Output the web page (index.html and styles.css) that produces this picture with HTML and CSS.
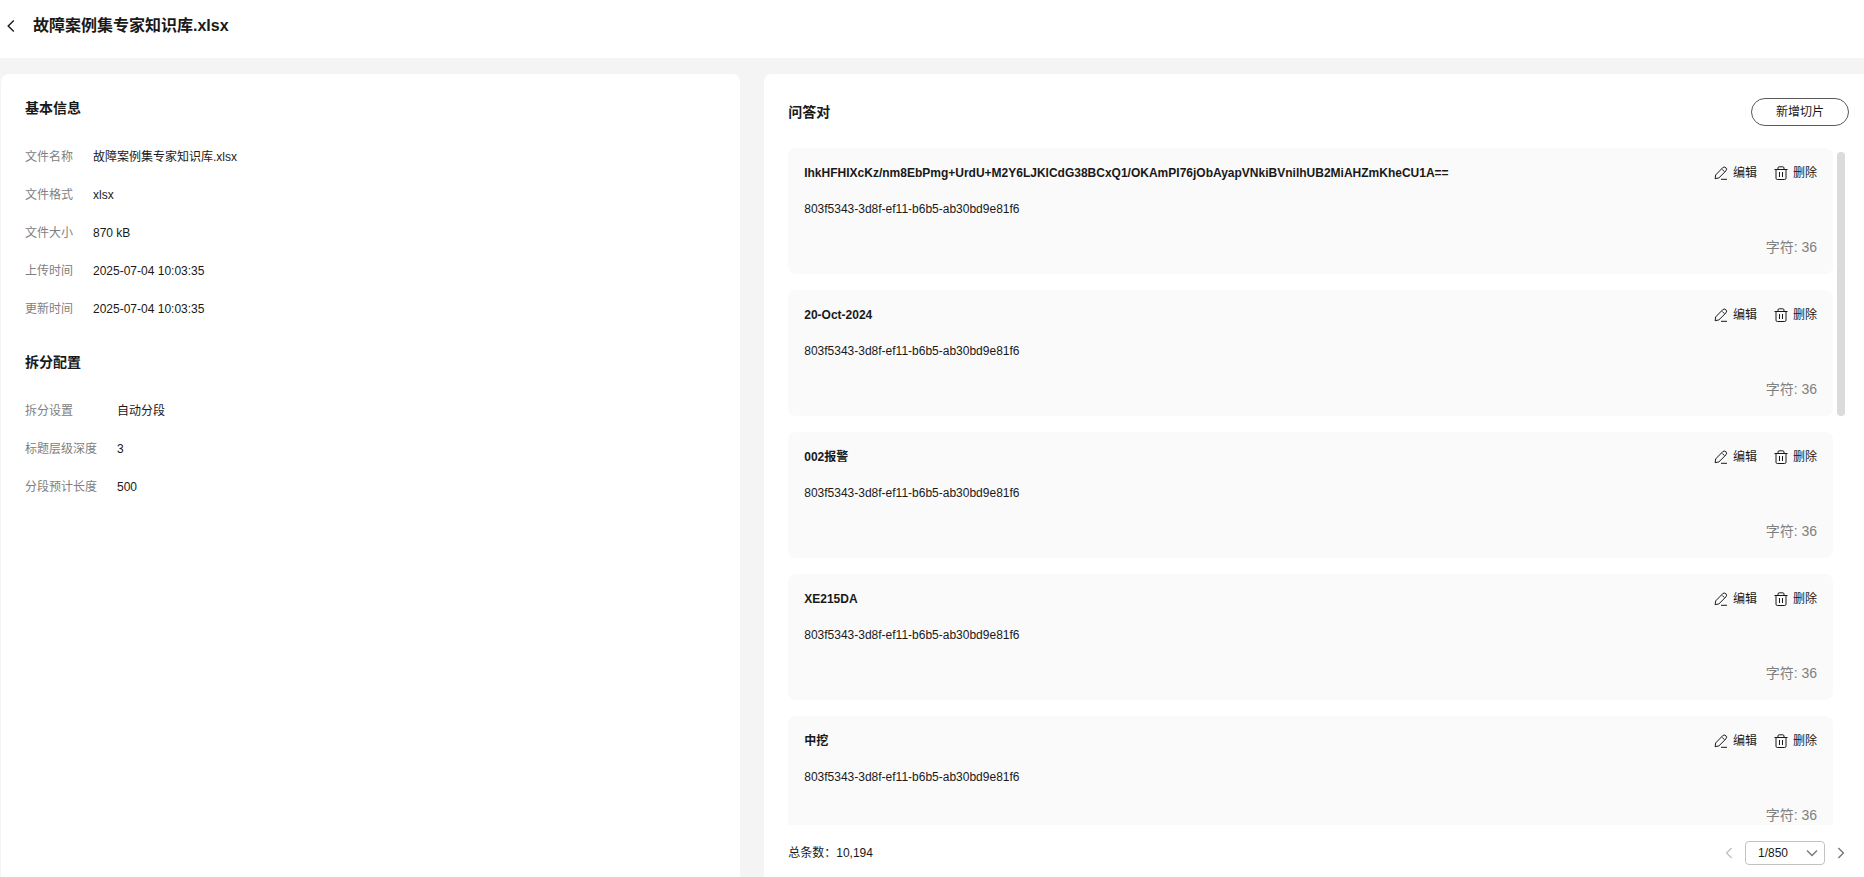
FILE: index.html
```html
<!DOCTYPE html>
<html lang="zh-CN">
<head>
    <meta charset="UTF-8">
    <meta name="viewport" content="width=device-width, initial-scale=1.0">
    <title>故障案例集专家知识库.xlsx</title>
    <link rel="stylesheet" href="styles.css">
</head>
<body>
    <svg class="sprite" aria-hidden="true">
        <symbol id="icon-edit" viewBox="0 0 14 14">
            <path d="M1.1 12.7 L1.7 8.9 L8.7 1.7 Q10.3 0.3 11.9 1.7 Q13.3 3.2 12 4.8 L4.9 11.9 Z M8.2 3.4 L10.4 5.6 M7 13.3 H13"/>
        </symbol>
        <symbol id="icon-trash" viewBox="0 0 14 14">
            <path d="M0.5 3.5 H13.5 M4 3.3 V2 Q4 0.8 5.2 0.8 H8.8 Q10 0.8 10 2 V3.3 M2 3.5 V12.2 Q2 13.5 3.3 13.5 H10.7 Q12 13.5 12 12.2 V3.5 M5.5 6 V11 M8.5 6 V11"/>
        </symbol>
    </svg>

    <header class="header">
        <button class="back" type="button" aria-label="返回">
            <svg viewBox="0 0 8 12"><path d="M6.8 0.6 L1.2 6 L6.8 11.4"/></svg>
        </button>
        <h1>故障案例集专家知识库.xlsx</h1>
    </header>

    <main class="main">
        <section class="panel info">
            <h2>基本信息</h2>
            <dl>
                <div><dt>文件名称</dt><dd>故障案例集专家知识库.xlsx</dd></div>
                <div><dt>文件格式</dt><dd>xlsx</dd></div>
                <div><dt>文件大小</dt><dd>870 kB</dd></div>
                <div><dt>上传时间</dt><dd>2025-07-04 10:03:35</dd></div>
                <div><dt>更新时间</dt><dd>2025-07-04 10:03:35</dd></div>
            </dl>
            <h2>拆分配置</h2>
            <dl class="wide">
                <div><dt>拆分设置</dt><dd>自动分段</dd></div>
                <div><dt>标题层级深度</dt><dd>3</dd></div>
                <div><dt>分段预计长度</dt><dd>500</dd></div>
            </dl>
        </section>

        <section class="panel qa">
            <div class="qa-head">
                <h2>问答对</h2>
                <button class="add" type="button">新增切片</button>
            </div>

            <div class="scroll">
                <div class="list">
                    <article class="card">
                        <div class="card-head">
                            <h3>IhkHFHIXcKz/nm8EbPmg+UrdU+M2Y6LJKlCdG38BCxQ1/OKAmPI76jObAyapVNkiBVnilhUB2MiAHZmKheCU1A==</h3>
                            <button type="button"><svg><use href="#icon-edit"/></svg>编辑</button>
                            <button type="button"><svg><use href="#icon-trash"/></svg>删除</button>
                        </div>
                        <p>803f5343-3d8f-ef11-b6b5-ab30bd9e81f6</p>
                        <div class="count">字符: 36</div>
                    </article>
                    <article class="card">
                        <div class="card-head">
                            <h3>20-Oct-2024</h3>
                            <button type="button"><svg><use href="#icon-edit"/></svg>编辑</button>
                            <button type="button"><svg><use href="#icon-trash"/></svg>删除</button>
                        </div>
                        <p>803f5343-3d8f-ef11-b6b5-ab30bd9e81f6</p>
                        <div class="count">字符: 36</div>
                    </article>
                    <article class="card">
                        <div class="card-head">
                            <h3>002报警</h3>
                            <button type="button"><svg><use href="#icon-edit"/></svg>编辑</button>
                            <button type="button"><svg><use href="#icon-trash"/></svg>删除</button>
                        </div>
                        <p>803f5343-3d8f-ef11-b6b5-ab30bd9e81f6</p>
                        <div class="count">字符: 36</div>
                    </article>
                    <article class="card">
                        <div class="card-head">
                            <h3>XE215DA</h3>
                            <button type="button"><svg><use href="#icon-edit"/></svg>编辑</button>
                            <button type="button"><svg><use href="#icon-trash"/></svg>删除</button>
                        </div>
                        <p>803f5343-3d8f-ef11-b6b5-ab30bd9e81f6</p>
                        <div class="count">字符: 36</div>
                    </article>
                    <article class="card">
                        <div class="card-head">
                            <h3>中挖</h3>
                            <button type="button"><svg><use href="#icon-edit"/></svg>编辑</button>
                            <button type="button"><svg><use href="#icon-trash"/></svg>删除</button>
                        </div>
                        <p>803f5343-3d8f-ef11-b6b5-ab30bd9e81f6</p>
                        <div class="count">字符: 36</div>
                    </article>
                </div>
                <div class="track"><div class="thumb"></div></div>
            </div>

            <footer class="footer">
                <span>总条数：10,194</span>
                <nav class="pager">
                    <button type="button" aria-label="上一页" disabled>
                        <svg viewBox="0 0 8 12"><path d="M6.6 1 L1.6 6 L6.6 11"/></svg>
                    </button>
                    <div class="page-select">
                        <select aria-label="页码">
                            <option>1/850</option>
                        </select>
                        <svg viewBox="0 0 12 8"><path d="M1 1.4 L6 6.4 L11 1.4"/></svg>
                    </div>
                    <button type="button" aria-label="下一页">
                        <svg viewBox="0 0 8 12"><path d="M1.4 1 L6.4 6 L1.4 11"/></svg>
                    </button>
                </nav>
            </footer>
        </section>
    </main>
</body>
</html>
```
FILE: styles.css
```css
* {
    box-sizing: border-box;
}
body {
    margin: 0;
    height: 100vh;
    display: flex;
    flex-direction: column;
    overflow: hidden;
    background-color: #f4f4f4;
    color: #191919;
    font-family: "Liberation Sans", "Noto Sans CJK SC", sans-serif;
    font-size: 12px;
    line-height: 18px;
}
h1, h2, h3, p, dl, dd {
    margin: 0;
}
button {
    padding: 0;
    border: 0;
    background: none;
    color: inherit;
    font: inherit;
    cursor: pointer;
}
svg {
    display: block;
    fill: none;
    stroke: currentColor;
}
.sprite {
    display: none;
}

/* header */
.header {
    display: flex;
    align-items: center;
    gap: 18px;
    height: 58px;
    padding: 0 7px 6px;
    background-color: #fff;
}
.header h1 {
    font-size: 16px;
    line-height: 24px;
}
.back svg {
    width: 8px;
    height: 12px;
    stroke-width: 1.4;
}

/* panels */
.main {
    flex: 1;
    min-height: 0;
    display: grid;
    grid-template-columns: 41fr 61fr;
    grid-template-rows: 100%;
    gap: 24px;
    padding: 16px 0 0 1px;
}
.panel {
    background-color: #fff;
    border-radius: 8px 8px 0 0;
    min-width: 0;
}
h2 {
    font-size: 14px;
    line-height: 20px;
}
.info {
    padding: 24px;
}
.info dl {
    display: flex;
    flex-direction: column;
    gap: 20px;
    margin: 30px 0 34px;
}
.info dl div {
    display: flex;
    gap: 20px;
}
.info dt {
    width: 48px;
    color: #808080;
}
.info .wide dt {
    width: 72px;
}

/* question and answer list */
.qa {
    display: flex;
    flex-direction: column;
    padding: 24px 15px 0 24px;
    border-top-right-radius: 0;
}
.qa-head {
    display: flex;
    align-items: center;
    justify-content: space-between;
    margin-bottom: 22px;
}
.add {
    width: 98px;
    height: 28px;
    border: 1px solid #595959;
    border-radius: 14px;
}
.scroll {
    flex: 1;
    min-height: 0;
    display: flex;
    gap: 4px;
    overflow: hidden;
}
.list {
    flex: 1;
    display: flex;
    flex-direction: column;
    gap: 16px;
}
.card {
    padding: 16px 16px 17px;
    background-color: #fafafa;
    border-radius: 8px;
}
.card-head {
    display: flex;
    align-items: center;
    gap: 17px;
}
.card-head h3 {
    flex: 1;
    font-size: 12px;
}
.card-head button {
    display: flex;
    align-items: center;
    gap: 5px;
}
.card-head svg {
    width: 14px;
    height: 14px;
}
.card p {
    margin: 18px 0 19px;
}
.count {
    color: #808080;
    font-size: 14px;
    line-height: 20px;
    text-align: right;
}
.track {
    width: 12px;
    padding: 4px 4px 0 0;
}
.thumb {
    height: 264px;
    border-radius: 4px;
    background-color: #dbdbdb;
}

/* footer */
.footer {
    display: flex;
    align-items: center;
    justify-content: space-between;
    padding: 16px 4px 12px 0;
}
.pager {
    display: flex;
    align-items: center;
    gap: 12px;
    color: #777;
}
.pager button:disabled {
    color: #c2c2c2;
}
.pager button svg {
    width: 8px;
    height: 12px;
    stroke-width: 1.4;
}
.page-select {
    position: relative;
}
.page-select select {
    appearance: none;
    display: block;
    width: 80px;
    height: 24px;
    padding: 0 24px 0 12px;
    border: 1px solid #c2c2c2;
    border-radius: 4px;
    background-color: #fff;
    color: #191919;
    font: inherit;
}
.page-select svg {
    position: absolute;
    right: 7px;
    top: 8px;
    width: 12px;
    height: 8px;
    stroke-width: 1.4;
    pointer-events: none;
}
```
